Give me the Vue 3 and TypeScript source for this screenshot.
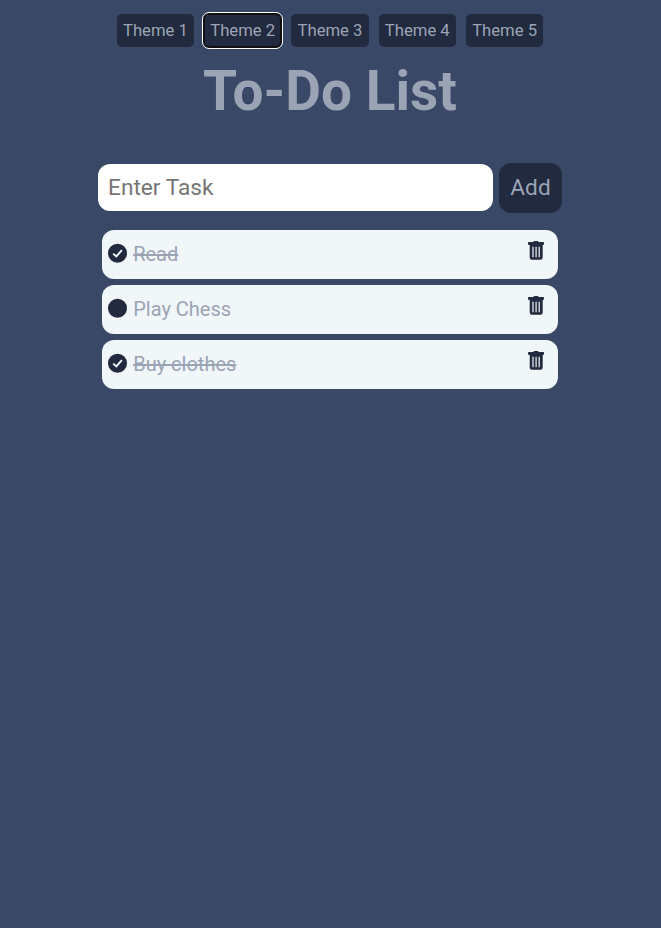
<script setup lang="ts">
import { ref } from 'vue'

interface Task {
  id: number
  text: string
  done: boolean
}

const themes = [1, 2, 3, 4, 5]
const activeTheme = ref(2)
const draft = ref('')
const tasks = ref<Task[]>([
  { id: 1, text: 'Read', done: true },
  { id: 2, text: 'Play Chess', done: false },
  { id: 3, text: 'Buy clothes', done: true },
])

function addTask() {
  const text = draft.value.trim()
  if (!text) return
  tasks.value.push({ id: Date.now(), text, done: false })
  draft.value = ''
}

function removeTask(id: number) {
  tasks.value = tasks.value.filter((t) => t.id !== id)
}
</script>

<template>
  <main class="page">
    <nav class="themes">
      <button
        v-for="n in themes"
        :key="n"
        class="theme"
        :class="{ active: n === activeTheme }"
        @click="activeTheme = n"
      >Theme {{ n }}</button>
    </nav>
    <h1 class="title">To-Do List</h1>
    <form class="entry" @submit.prevent="addTask">
      <input v-model="draft" class="field" type="text" placeholder="Enter Task" />
      <button class="add" type="submit">Add</button>
    </form>
    <ul class="list">
      <li v-for="task in tasks" :key="task.id" class="task">
        <button class="check" @click="task.done = !task.done">
          <svg viewBox="0 0 20 20" width="20" height="20">
            <circle cx="10.5" cy="10.3" r="9.5" fill="#212a3e" />
            <path v-if="task.done" d="M6.2 10.6 9.3 13.5 14.9 7.2" fill="none" stroke="#f1f6f9" stroke-width="1.9" />
          </svg>
        </button>
        <span class="label" :class="{ done: task.done }">{{ task.text }}</span>
        <button class="remove" @click="removeTask(task.id)">
          <svg viewBox="0 0 16 20" width="16" height="20">
            <path fill="#212a3e" d="M5.3 .9Q5.5 0 6.5 0h3q1 0 1.2.9H15q1 0 1 .9v1.3q0 .8-.8.8H14.700V16.600a2.200 2.200 0 0 1-2.200 2.200H3.900a2.200 2.200 0 0 1-2.200-2.200V3.900H.8Q0 3.900 0 3.100V1.800Q0 .9 1 .9z" />
            <path stroke="#d5dae1" stroke-width="1.4" d="M5 5.800v10.500M8.100 5.800v10.500M11.200 5.800v10.500" />
          </svg>
        </button>
      </li>
    </ul>
  </main>
</template>

<style>
body {
  background: #394867;
}
</style>

<style scoped>
.page {
  box-sizing: border-box;
  min-height: 928px;
  padding-top: 14px;
  background: #394867;
  font-family: Roboto, sans-serif;
  color: #9ba4b5;
}
button {
  border: 0;
  padding: 0;
  font-family: inherit;
  color: inherit;
  background: none;
}
.themes {
  display: flex;
  justify-content: center;
  gap: 10px;
  padding-right: 1px;
}
.theme {
  width: 77.3px;
  height: 33px;
  padding-bottom: 1px;
  border-radius: 5px;
  background: #212a3e;
  font-size: 16.667px;
}
.theme.active {
  outline: 1px solid #fff;
  outline-offset: 1px;
  box-shadow: 0 0 0 1px #101010, inset 0 0 0 1px #101010;
}
.title {
  margin: 11px 0 0;
  padding-right: 1px;
  height: 66px;
  line-height: 66px;
  font-size: 55px;
  font-weight: 700;
  text-align: center;
}
.entry {
  display: flex;
  justify-content: center;
  align-items: flex-start;
  gap: 6px;
  margin-top: 39px;
  padding-right: 1px;
}
.field {
  box-sizing: border-box;
  width: 395px;
  height: 47px;
  margin-top: 1px;
  padding: 0 10px;
  border: 0;
  border-radius: 12px;
  background: #fff;
  font: 22.667px Roboto, sans-serif;
}
.field::placeholder {
  color: #757575;
}
.add {
  width: 63px;
  height: 50px;
  padding-bottom: 2px;
  border-radius: 12px;
  background: #212a3e;
  font-size: 22.667px;
}
.list {
  display: flex;
  flex-direction: column;
  gap: 6px;
  width: 456px;
  margin: 17px 0 0 102px;
  padding: 0;
  list-style: none;
}
.task {
  display: flex;
  box-sizing: border-box;
  height: 49px;
  padding: 0 14px 0 5px;
  border-radius: 12px;
  background: #f1f6f9;
}
.check {
  width: 20px;
  height: 20px;
  margin-top: 13px;
}
.label {
  flex: 1;
  margin-left: 6.2px;
  line-height: 48px;
  font-size: 20px;
}
.label.done {
  text-decoration: line-through;
}
.remove {
  width: 16px;
  height: 20px;
  margin-top: 11px;
}
svg {
  display: block;
}
</style>
